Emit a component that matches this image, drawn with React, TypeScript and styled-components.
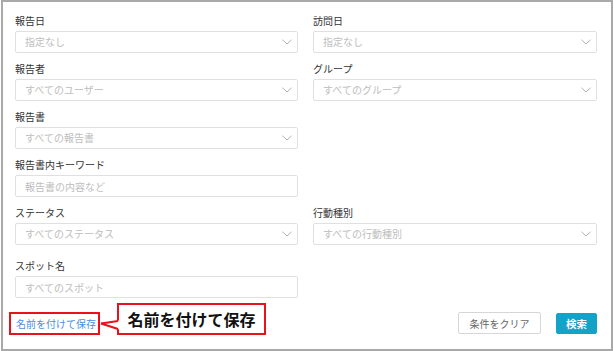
import * as React from 'react'
import styled, { createGlobalStyle } from 'styled-components'

const GlobalStyle = createGlobalStyle`
  html, body {
    margin: 0;
    padding: 0;
    background: #fff;
  }
  body {
    font-family: "Noto Sans CJK JP", "Noto Sans", sans-serif;
  }
`

const Frame = styled.div`
  position: relative;
  box-sizing: border-box;
  width: 612px;
  height: 351px;
  margin-left: 1px;
  border: 2px solid #a9a9a9;
  background: #fff;
  padding: 11px 14px 0 12px;
`

const Row = styled.div<{ $extra?: boolean }>`
  display: grid;
  grid-template-columns: 283px 284px;
  column-gap: 15px;
  margin-top: ${({ $extra }) => ($extra ? '13px' : '8px')};

  &:first-child {
    margin-top: 0;
  }
`

const Field = styled.div`
  display: flex;
  flex-direction: column;
`

const Label = styled.div`
  font-size: 10px;
  line-height: 16px;
  height: 16px;
  color: #333;
  margin-bottom: 2px;
  white-space: nowrap;
`

const SelectBox = styled.div`
  position: relative;
  box-sizing: border-box;
  height: 22px;
  border: 1px solid #e0e0e0;
  border-radius: 2px;
  padding-left: 9px;
  font-size: 10px;
  line-height: 20px;
  color: #bdbdbd;
  display: flex;
  align-items: center;
  justify-content: space-between;
  padding-right: 5px;
`

const TextBox = styled.input`
  box-sizing: border-box;
  height: 22px;
  width: 100%;
  border: 1px solid #e0e0e0;
  border-radius: 2px;
  padding: 0 0 0 9px;
  margin: 0;
  font-family: inherit;
  font-size: 10px;
  color: #333;
  outline: none;

  &::placeholder {
    color: #bdbdbd;
  }
`

const Footer = styled.div`
  position: relative;
  display: flex;
  align-items: center;
  justify-content: space-between;
  margin-top: 13px;
  height: 24px;
`

const SaveLinkBox = styled.div`
  box-sizing: border-box;
  height: 23px;
  margin-left: -6px;
  border: 2px solid #e8121c;
  padding: 0 2px 0 5px;
  display: flex;
  align-items: center;
`

const SaveLink = styled.a`
  font-size: 10px;
  color: #4a8fe0;
  text-decoration: none;
  white-space: nowrap;
`

const Callout = styled.div`
  position: absolute;
  left: 102px;
  top: -8px;
  box-sizing: border-box;
  width: 149px;
  height: 32px;
  border: 2px solid #e8121c;
  background: #fff;
  display: flex;
  align-items: center;
  justify-content: center;
  font-size: 16px;
  font-weight: 700;
  color: #111;
  white-space: nowrap;
`

const Tail = styled.svg`
  position: absolute;
  left: -19px;
  top: 14px;
  overflow: visible;
`

const Buttons = styled.div`
  display: flex;
  align-items: center;
  gap: 15px;
`

const Button = styled.button<{ $primary?: boolean }>`
  box-sizing: border-box;
  height: ${({ $primary }) => ($primary ? '21px' : '22px')};
  width: ${({ $primary }) => ($primary ? '41px' : '83px')};
  padding: 0;
  border: 1px solid ${({ $primary }) => ($primary ? '#15a2c8' : '#d6d6d6')};
  border-radius: 2px;
  background: ${({ $primary }) => ($primary ? '#15a2c8' : '#fff')};
  color: ${({ $primary }) => ($primary ? '#fff' : '#666')};
  font-family: inherit;
  font-size: ${({ $primary }) => ($primary ? '10.5px' : '10px')};
  font-weight: ${({ $primary }) => ($primary ? 700 : 400)};
  cursor: pointer;
`

function Chevron() {
  return (
    <svg width="10" height="6" viewBox="0 0 10 6">
      <path d="M0.5 0.8 L5 5 L9.5 0.8" fill="none" stroke="#b0b0b0" strokeWidth="1" />
    </svg>
  )
}

function SelectField({ label, placeholder }: { label: string; placeholder: string }) {
  return (
    <Field>
      <Label>{label}</Label>
      <SelectBox>
        <span>{placeholder}</span>
        <Chevron />
      </SelectBox>
    </Field>
  )
}

function TextField({ label, placeholder }: { label: string; placeholder: string }) {
  return (
    <Field>
      <Label>{label}</Label>
      <TextBox placeholder={placeholder} />
    </Field>
  )
}

export default function App() {
  return (
    <>
      <GlobalStyle />
      <Frame>
        <Row>
          <SelectField label="報告日" placeholder="指定なし" />
          <SelectField label="訪問日" placeholder="指定なし" />
        </Row>
        <Row>
          <SelectField label="報告者" placeholder="すべてのユーザー" />
          <SelectField label="グループ" placeholder="すべてのグループ" />
        </Row>
        <Row>
          <SelectField label="報告書" placeholder="すべての報告書" />
        </Row>
        <Row>
          <TextField label="報告書内キーワード" placeholder="報告書の内容など" />
        </Row>
        <Row>
          <SelectField label="ステータス" placeholder="すべてのステータス" />
          <SelectField label="行動種別" placeholder="すべての行動種別" />
        </Row>
        <Row $extra>
          <TextField label="スポット名" placeholder="すべてのスポット" />
        </Row>
        <Footer>
          <SaveLinkBox>
            <SaveLink href="#">名前を付けて保存</SaveLink>
          </SaveLinkBox>
          <Callout>
            <Tail width="21" height="12" viewBox="0 0 21 12">
              <polygon points="1,4.5 19.5,1.5 19.5,10.5" fill="#fff" />
              <line x1="1" y1="4.5" x2="18" y2="2" stroke="#e8121c" strokeWidth="2" />
              <line x1="1" y1="4.5" x2="18" y2="10" stroke="#e8121c" strokeWidth="2" />
            </Tail>
            名前を付けて保存
          </Callout>
          <Buttons>
            <Button>条件をクリア</Button>
            <Button $primary>検索</Button>
          </Buttons>
        </Footer>
      </Frame>
    </>
  )
}
